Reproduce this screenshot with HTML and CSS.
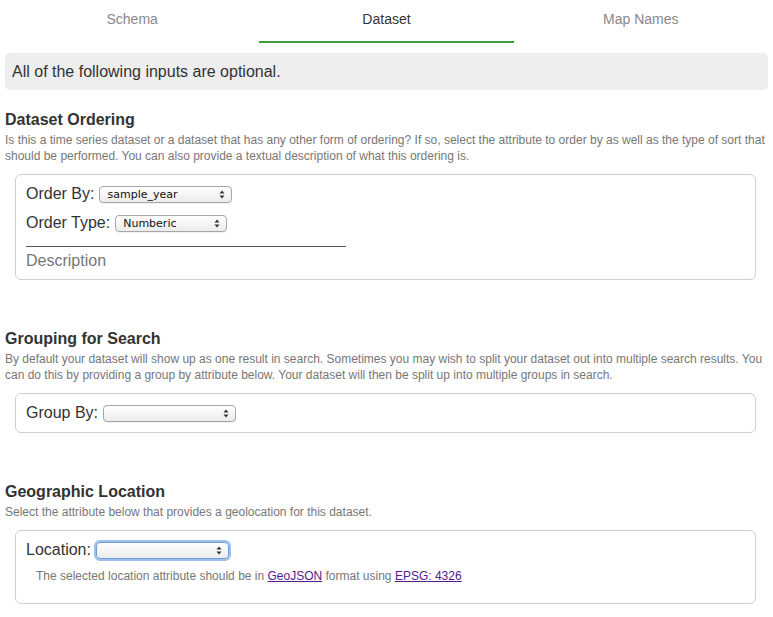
FILE: index.html
```html
<!DOCTYPE html>
<html>
<head>
<meta charset="utf-8">
<link rel="stylesheet" href="styles.css">
</head>
<body>
<div class="page">
  <nav class="tabs">
    <div class="tab">Schema</div>
    <div class="tab active">Dataset</div>
    <div class="tab">Map Names</div>
  </nav>

  <div class="alert">All of the following inputs are optional.</div>

  <section class="section first">
    <h2 class="title">Dataset Ordering</h2>
    <p class="desc">Is this a time series dataset or a dataset that has any other form of ordering? If so, select the attribute to order by as well as the type of sort that should be performed. You can also provide a textual description of what this ordering is.</p>
    <div class="box">
      <div class="row">
        <label class="label">Order By:</label>
        <span class="select w133">
          <span class="select-text">sample_year</span>
          <svg class="arrows" width="6" height="9" viewBox="0 0 6 9"><path d="M3 0.5 L5.5 3.5 H0.5 Z M3 8.5 L5.5 5.5 H0.5 Z" fill="#333"/></svg>
        </span>
      </div>
      <div class="row">
        <label class="label">Order Type:</label>
        <span class="select w112">
          <span class="select-text">Numberic</span>
          <svg class="arrows" width="6" height="9" viewBox="0 0 6 9"><path d="M3 0.5 L5.5 3.5 H0.5 Z M3 8.5 L5.5 5.5 H0.5 Z" fill="#333"/></svg>
        </span>
      </div>
      <div class="textarea">Description</div>
    </div>
  </section>

  <section class="section">
    <h2 class="title">Grouping for Search</h2>
    <p class="desc">By default your dataset will show up as one result in search. Sometimes you may wish to split your dataset out into multiple search results. You can do this by providing a group by attribute below. Your dataset will then be split up into multiple groups in search.</p>
    <div class="box">
      <div class="row">
        <label class="label">Group By:</label>
        <span class="select w133">
          <span class="select-text"></span>
          <svg class="arrows" width="6" height="9" viewBox="0 0 6 9"><path d="M3 0.5 L5.5 3.5 H0.5 Z M3 8.5 L5.5 5.5 H0.5 Z" fill="#333"/></svg>
        </span>
      </div>
    </div>
  </section>

  <section class="section">
    <h2 class="title">Geographic Location</h2>
    <p class="desc">Select the attribute below that provides a geolocation for this dataset.</p>
    <div class="box box-loc">
      <div class="row">
        <label class="label">Location:</label>
        <span class="select w133 focused">
          <span class="select-text"></span>
          <svg class="arrows" width="6" height="9" viewBox="0 0 6 9"><path d="M3 0.5 L5.5 3.5 H0.5 Z M3 8.5 L5.5 5.5 H0.5 Z" fill="#333"/></svg>
        </span>
      </div>
      <p class="note">The selected location attribute should be in <a href="#">GeoJSON</a> format using <a href="#">EPSG: 4326</a></p>
    </div>
  </section>
</div>
</body>
</html>
```

FILE: styles.css
```css
* { box-sizing: border-box; }

html, body {
  margin: 0;
  padding: 0;
  background: #fff;
}

body {
  font-family: "Liberation Sans", Arial, sans-serif;
  color: #333;
}

.page {
  padding: 0 5px;
}

.tabs {
  display: flex;
}

.tab {
  flex: 1 1 0;
  text-align: center;
  font-size: 14px;
  line-height: 18px;
  padding: 10px 0 13px;
  color: #888;
  border-bottom: 2px solid transparent;
}

.tab.active {
  color: #333;
  border-bottom-color: #3b9c3b;
}

.alert {
  margin-top: 10px;
  background: #eeeeee;
  border-radius: 5px;
  padding: 8px 7px;
  font-size: 16px;
  line-height: 21px;
  color: #333;
}

.section {
  margin-top: 49px;
}

.section.first {
  margin-top: 20px;
}

.title {
  margin: 0 0 2px;
  font-size: 16px;
  line-height: 20px;
  font-weight: bold;
  color: #333;
}

.desc {
  margin: 0 0 10px;
  font-size: 12px;
  line-height: 16px;
  color: #777;
}

.box {
  margin: 0 12px 0 10px;
  border: 1px solid #cfcfcf;
  border-radius: 6px;
  padding: 8px 10px 8px;
}

.box-loc {
  padding-bottom: 19px;
}

.row {
  display: flex;
  align-items: center;
  height: 22px;
  margin-bottom: 7px;
}

.row:last-child {
  margin-bottom: 0;
}

.label {
  font-size: 16px;
  line-height: 22px;
  color: #333;
  margin-right: 5px;
}

.select {
  position: relative;
  display: inline-flex;
  align-items: center;
  height: 17px;
  border: 1px solid #a6a6a6;
  border-radius: 4px;
  background: linear-gradient(#ffffff, #ececec);
  box-shadow: 0 1px 0 rgba(0,0,0,0.05);
  font-family: "DejaVu Sans", "Liberation Sans", sans-serif;
  font-size: 11px;
  color: #111;
  padding-left: 7px;
}

.w133 { width: 133px; }
.w112 { width: 112px; }

.select.focused {
  border-color: #6c9bd6;
  box-shadow: 0 0 0 2px #9ec0ea;
}

.select-text {
  flex: 1;
  line-height: 15px;
}

.arrows {
  position: absolute;
  right: 6px;
  top: 3px;
}

.textarea {
  width: 320px;
  border-top: 1px solid #555;
  margin-top: 12px;
  padding-top: 4px;
  font-size: 16px;
  line-height: 20px;
  color: #777;
}

.note {
  margin: 8px 0 0 10px;
  font-size: 12px;
  line-height: 15px;
  color: #777;
}

.note a {
  color: #551a8b;
  text-decoration: underline;
}
```
